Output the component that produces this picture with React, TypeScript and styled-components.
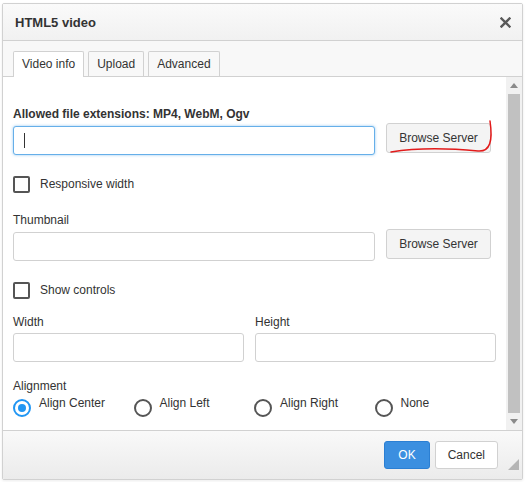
import styled, { createGlobalStyle } from 'styled-components';

const GlobalStyle = createGlobalStyle`
    html, body {
        margin: 0;
        padding: 0;
        background: #ffffff;
        font-family: "Liberation Sans", Arial, sans-serif;
        font-size: 12px;
        color: #333333;
    }
`;

const Page = styled.div`
    padding: 3px 0 0 2px;
    width: 528px;
    height: 482px;
    box-sizing: border-box;
`;

const Dialog = styled.div`
    width: 521px;
    height: 477px;
    box-sizing: border-box;
    border: 1px solid #d1d1d1;
    border-radius: 2px;
    display: flex;
    flex-direction: column;
    background: #ffffff;
    box-shadow: 0 1px 3px rgba(0, 0, 0, 0.08);
    overflow: hidden;
`;

const TitleBar = styled.div`
    height: 36px;
    flex: none;
    display: flex;
    align-items: center;
    justify-content: space-between;
    padding: 0 9px 0 12px;
    background: linear-gradient(#fafafa, #f1f1f1);
    border-bottom: 1px solid #d1d1d1;
`;

const Title = styled.h1`
    margin: 0;
    font-size: 13px;
    font-weight: bold;
    color: #333333;
`;

const CloseButton = styled.button`
    border: 0;
    background: none;
    padding: 0;
    width: 16px;
    height: 16px;
    display: flex;
    align-items: center;
    justify-content: center;
    cursor: pointer;
`;

const TabBar = styled.div`
    height: 35px;
    flex: none;
    display: flex;
    align-items: flex-end;
    gap: 4px;
    padding-left: 10px;
    background: #f8f8f8;
    border-bottom: 1px solid #d1d1d1;
`;

const Tab = styled.div<{ $active?: boolean }>`
    box-sizing: border-box;
    padding: 0 8px;
    display: flex;
    align-items: center;
    border: 1px solid #d1d1d1;
    border-bottom: none;
    border-radius: 2px 2px 0 0;
    background: ${(p) => (p.$active ? '#ffffff' : '#f8f8f8')};
    color: #333333;
    margin-bottom: ${(p) => (p.$active ? '-1px' : '0')};
    height: ${(p) => (p.$active ? '26px' : '25px')};
    padding-bottom: ${(p) => (p.$active ? '1px' : '0')};
    cursor: pointer;
`;

const Body = styled.div`
    flex: 1;
    display: flex;
    min-height: 0;
`;

const Content = styled.div`
    flex: 1;
    padding: 30px 10px 0 10px;
    overflow: hidden;
`;

const FieldLabel = styled.div<{ $bold?: boolean; $gap?: number }>`
    font-weight: ${(p) => (p.$bold ? 'bold' : 'normal')};
    line-height: 14px;
    margin-bottom: ${(p) => (p.$gap ?? 2)}px;
`;

const FileRow = styled.div<{ $after?: number }>`
    display: flex;
    align-items: flex-start;
    gap: 11px;
    margin-bottom: ${(p) => p.$after ?? 20}px;
`;

const TextInput = styled.input<{ $focused?: boolean; $w?: number }>`
    width: ${(p) => (p.$w ? `${p.$w}px` : '100%')};
    height: 29px;
    box-sizing: border-box;
    margin: 3px 0 0 0;
    padding: 0 8px;
    border-radius: 3px;
    font-family: inherit;
    font-size: 12px;
    outline: none;
    border: 1px solid ${(p) => (p.$focused ? '#66afe9' : '#d1d1d1')};
    box-shadow: ${(p) =>
        p.$focused ? '0 0 3px rgba(102, 175, 233, 0.7)' : 'none'};
    background: ${(p) =>
        p.$focused
            ? 'linear-gradient(#333, #333) no-repeat 10px center / 1px 15px, #fff'
            : '#fff'};
`;

const ButtonWrap = styled.div`
    position: relative;
`;

const BrowseButton = styled.button`
    width: 105px;
    height: 30px;
    box-sizing: border-box;
    border: 1px solid #d1d1d1;
    border-radius: 3px;
    background: #f4f4f4;
    color: #333333;
    font-family: inherit;
    font-size: 12px;
    padding: 0;
    cursor: pointer;
`;

const Scribble = styled.svg`
    position: absolute;
    left: 0;
    top: -6px;
    overflow: visible;
    pointer-events: none;
`;

const CheckRow = styled.label<{ $after: number }>`
    display: flex;
    align-items: center;
    gap: 10px;
    height: 18px;
    margin-bottom: ${(p) => p.$after}px;
    cursor: pointer;
`;

const CheckBox = styled.span`
    width: 17px;
    height: 17px;
    box-sizing: border-box;
    border: 2px solid #555555;
    border-radius: 2px;
    background: #ffffff;
    flex: none;
`;

const SizeGrid = styled.div`
    display: grid;
    grid-template-columns: 231px 241px;
    column-gap: 11px;
    margin-bottom: 17px;
`;

const SizeField = styled.div`
    display: flex;
    flex-direction: column;
`;

const RadioRow = styled.div`
    display: grid;
    grid-template-columns: repeat(4, 120.5px);
    margin-top: 3px;
`;

const RadioOption = styled.label`
    display: flex;
    align-items: flex-start;
    gap: 8px;
    cursor: pointer;
`;

const RadioCircle = styled.span<{ $checked?: boolean }>`
    width: 18px;
    height: 18px;
    box-sizing: border-box;
    border-radius: 50%;
    border: 2px solid ${(p) => (p.$checked ? '#2196f3' : '#555555')};
    margin-top: 3px;
    flex: none;
    display: flex;
    align-items: center;
    justify-content: center;
    &::after {
        content: '';
        width: 8px;
        height: 8px;
        border-radius: 50%;
        background: ${(p) => (p.$checked ? '#2196f3' : 'transparent')};
    }
`;

const RadioText = styled.span`
    line-height: 14px;
`;

const Scrollbar = styled.div`
    width: 16px;
    flex: none;
    background: #f1f1f1;
    display: flex;
    flex-direction: column;
    align-items: center;
`;

const ScrollArrow = styled.div`
    height: 17px;
    display: flex;
    align-items: center;
    justify-content: center;
`;

const ScrollThumb = styled.div`
    width: 12px;
    flex: 1;
    background: #c1c1c1;
`;

const Footer = styled.div`
    height: 48px;
    flex: none;
    display: flex;
    align-items: center;
    justify-content: flex-end;
    gap: 5px;
    padding-right: 24px;
    background: linear-gradient(#f9f9f9, #ebebeb);
    border-top: 1px solid #d1d1d1;
    position: relative;
`;

const FooterButton = styled.button<{ $primary?: boolean }>`
    height: 28px;
    box-sizing: border-box;
    padding: 0 ${(p) => (p.$primary ? '13px' : '12px')};
    border-radius: 3px;
    font-family: inherit;
    font-size: 12px;
    cursor: pointer;
    border: 1px solid ${(p) => (p.$primary ? '#2b7fd3' : '#d1d1d1')};
    background: ${(p) => (p.$primary ? '#3b8fe0' : '#ffffff')};
    color: ${(p) => (p.$primary ? '#ffffff' : '#333333')};
`;

const ResizeGrip = styled.span`
    position: absolute;
    right: 3px;
    bottom: 9px;
    width: 0;
    height: 0;
    border-style: solid;
    border-width: 0 0 11px 11px;
    border-color: transparent transparent #b5b5b5 transparent;
`;

const Triangle = ({ up }: { up?: boolean }) => (
    <svg width="8" height="5" viewBox="0 0 8 5">
        <path d={up ? 'M0 5 L4 0 L8 5 Z' : 'M0 0 L4 5 L8 0 Z'} fill="#8a8a8a" />
    </svg>
);

const alignments = ['Align Center', 'Align Left', 'Align Right', 'None'];

const App = () => {
    return (
        <Page>
            <GlobalStyle />
            <Dialog>
                <TitleBar>
                    <Title>HTML5 video</Title>
                    <CloseButton aria-label="Close">
                        <svg width="11" height="11" viewBox="0 0 11 11">
                            <path
                                d="M1.5 1.5 L9.5 9.5 M9.5 1.5 L1.5 9.5"
                                stroke="#5a5a5a"
                                strokeWidth="2.4"
                                strokeLinecap="square"
                            />
                        </svg>
                    </CloseButton>
                </TitleBar>
                <TabBar>
                    <Tab $active>Video info</Tab>
                    <Tab>Upload</Tab>
                    <Tab>Advanced</Tab>
                </TabBar>
                <Body>
                    <Content>
                        <FieldLabel $bold>
                            Allowed file extensions: MP4, WebM, Ogv
                        </FieldLabel>
                        <FileRow>
                            <TextInput $focused $w={362} />
                            <ButtonWrap>
                                <BrowseButton>Browse Server</BrowseButton>
                                <Scribble width="110" height="40">
                                    <path
                                        d="M5 35 C 30 31, 60 31, 92 34 C 104 35, 107 24, 104 4"
                                        stroke="#e21b1b"
                                        strokeWidth="1.5"
                                        fill="none"
                                        strokeLinecap="round"
                                    />
                                </Scribble>
                            </ButtonWrap>
                        </FileRow>
                        <CheckRow $after={20}>
                            <CheckBox />
                            Responsive width
                        </CheckRow>
                        <FieldLabel>Thumbnail</FieldLabel>
                        <FileRow>
                            <TextInput $w={362} />
                            <BrowseButton>Browse Server</BrowseButton>
                        </FileRow>
                        <CheckRow $after={16}>
                            <CheckBox />
                            Show controls
                        </CheckRow>
                        <SizeGrid>
                            <SizeField>
                                <FieldLabel $gap={1}>Width</FieldLabel>
                                <TextInput />
                            </SizeField>
                            <SizeField>
                                <FieldLabel $gap={1}>Height</FieldLabel>
                                <TextInput />
                            </SizeField>
                        </SizeGrid>
                        <FieldLabel $gap={0}>Alignment</FieldLabel>
                        <RadioRow>
                            {alignments.map((name, i) => (
                                <RadioOption key={name}>
                                    <RadioCircle $checked={i === 0} />
                                    <RadioText>{name}</RadioText>
                                </RadioOption>
                            ))}
                        </RadioRow>
                    </Content>
                    <Scrollbar>
                        <ScrollArrow>
                            <Triangle up />
                        </ScrollArrow>
                        <ScrollThumb />
                        <ScrollArrow>
                            <Triangle />
                        </ScrollArrow>
                    </Scrollbar>
                </Body>
                <Footer>
                    <FooterButton $primary>OK</FooterButton>
                    <FooterButton>Cancel</FooterButton>
                    <ResizeGrip />
                </Footer>
            </Dialog>
        </Page>
    );
};

export default App;
